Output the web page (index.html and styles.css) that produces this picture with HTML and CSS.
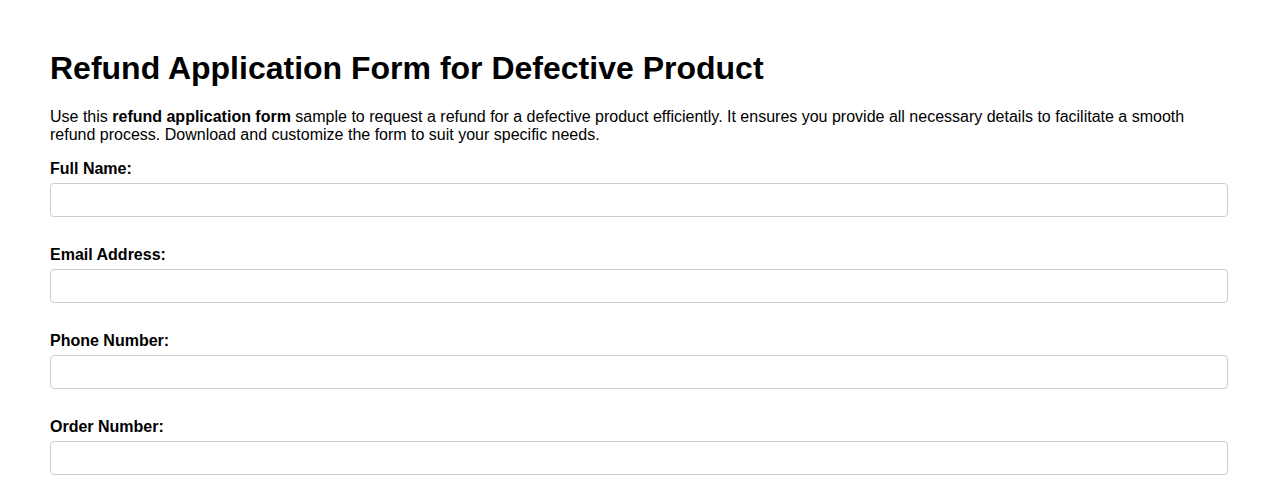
FILE: index.html
```html
<!DOCTYPE html>
<html lang="en">
<head>
<meta charset="utf-8">
<title>Refund Application Form for Defective Product</title>
<link rel="stylesheet" href="styles.css">
</head>
<body>
<main class="page">
  <h1 class="title">Refund Application Form for Defective Product</h1>
  <p class="intro">Use this <strong>refund application form</strong> sample to request a refund for a defective product efficiently. It ensures you provide all necessary details to facilitate a smooth refund process. Download and customize the form to suit your specific needs.</p>
  <form class="form">
    <div class="field">
      <label class="label" for="name">Full Name:</label>
      <input class="input" id="name" type="text">
    </div>
    <div class="field">
      <label class="label" for="email">Email Address:</label>
      <input class="input" id="email" type="email">
    </div>
    <div class="field">
      <label class="label" for="phone">Phone Number:</label>
      <input class="input" id="phone" type="tel">
    </div>
    <div class="field">
      <label class="label" for="order">Order Number:</label>
      <input class="input" id="order" type="text">
    </div>
  </form>
</main>
</body>
</html>
```
FILE: styles.css
```css
html, body {
  margin: 0;
  padding: 0;
  background: #fff;
}
body {
  font-family: "Liberation Sans", Arial, sans-serif;
  color: #000;
}
.page {
  padding: 50px 50px 0;
}
.title {
  margin: 0 0 21px;
  font-size: 32px;
  line-height: 37px;
  font-weight: bold;
}
.intro {
  margin: 0 0 16px;
  font-size: 16px;
  line-height: normal;
}
.form {
  display: flex;
  flex-direction: column;
  gap: 29px;
}
.field {
  display: flex;
  flex-direction: column;
  gap: 5px;
}
.label {
  font-size: 16px;
  line-height: 18px;
  font-weight: bold;
}
.input {
  box-sizing: border-box;
  width: 100%;
  height: 34px;
  margin: 0;
  padding: 8px;
  border: 1px solid #ccc;
  border-radius: 4px;
  font-family: inherit;
  font-size: 16px;
  background: #fff;
}
```
